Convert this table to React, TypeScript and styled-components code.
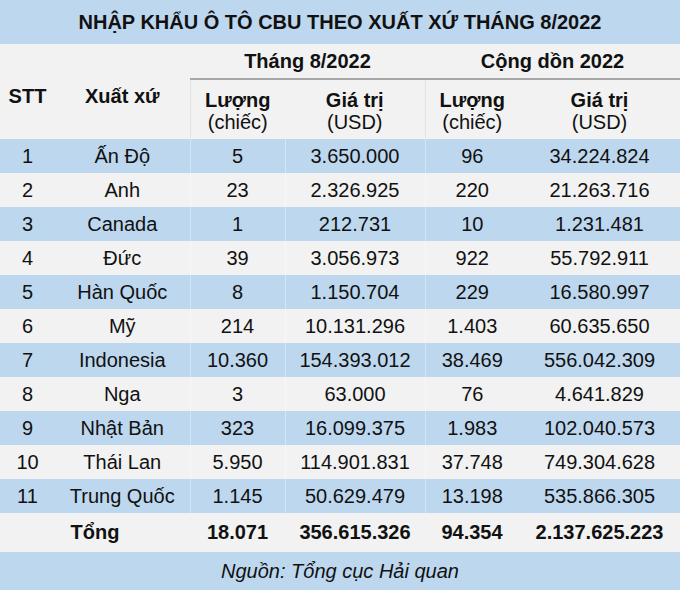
import React from "react";
import styled, { createGlobalStyle } from "styled-components";

const Global = createGlobalStyle`
  html, body { margin: 0; padding: 0; background: #f2f2f2; }
  body { font-family: "Liberation Sans", Arial, sans-serif; color: #111; }
`;

const BLUE = "#bdd7ee";
const GRAY = "#f2f2f2";

const Table = styled.table`
  width: 680px;
  border-collapse: collapse;
  table-layout: fixed;
  font-family: "Liberation Sans", Arial, sans-serif;
  font-size: 20px;
`;

const TitleCell = styled.th`
  height: 44px;
  padding: 0;
  background: ${BLUE};
  font-size: 20px;
  font-weight: bold;
  text-align: center;
  vertical-align: middle;
`;

const HeadRow = styled.tr<{ $h: number }>`
  height: ${(p) => p.$h}px;
  background: ${GRAY};
`;

const HeadCell = styled.th<{ $line?: boolean; $sep?: boolean; $pt?: number }>`
  padding: ${(p) => p.$pt ?? 0}px 0 0 0;
  font-weight: bold;
  text-align: center;
  vertical-align: middle;
  line-height: 22px;
  border-bottom: ${(p) => (p.$line ? "2px solid #a6a6a6" : "none")};
  border-left: ${(p) => (p.$sep ? "1px solid #e4e4e4" : "none")};
`;

const Unit = styled.span`
  display: block;
  font-weight: normal;
`;

const Row = styled.tr<{ $blue: boolean; $h?: number }>`
  height: ${(p) => p.$h ?? 34}px;
  background: ${(p) => (p.$blue ? BLUE : GRAY)};
`;

const Cell = styled.td<{ $bold?: boolean; $sep?: boolean }>`
  padding: 0;
  text-align: center;
  vertical-align: middle;
  font-weight: ${(p) => (p.$bold ? "bold" : "normal")};
  border-left: ${(p) => (p.$sep ? "1px solid rgba(255,255,255,0.35)" : "none")};
`;

const Source = styled.td`
  height: 38px;
  padding: 0;
  background: ${BLUE};
  text-align: center;
  font-style: italic;
  font-size: 20px;
  vertical-align: middle;
`;

const rows: [string, string, string, string, string][] = [
  ["Ấn Độ", "5", "3.650.000", "96", "34.224.824"],
  ["Anh", "23", "2.326.925", "220", "21.263.716"],
  ["Canada", "1", "212.731", "10", "1.231.481"],
  ["Đức", "39", "3.056.973", "922", "55.792.911"],
  ["Hàn Quốc", "8", "1.150.704", "229", "16.580.997"],
  ["Mỹ", "214", "10.131.296", "1.403", "60.635.650"],
  ["Indonesia", "10.360", "154.393.012", "38.469", "556.042.309"],
  ["Nga", "3", "63.000", "76", "4.641.829"],
  ["Nhật Bản", "323", "16.099.375", "1.983", "102.040.573"],
  ["Thái Lan", "5.950", "114.901.831", "37.748", "749.304.628"],
  ["Trung Quốc", "1.145", "50.629.479", "13.198", "535.866.305"],
];

export default function App() {
  return (
    <>
      <Global />
      <Table>
        <colgroup>
          <col style={{ width: 55 }} />
          <col style={{ width: 135 }} />
          <col style={{ width: 95 }} />
          <col style={{ width: 140 }} />
          <col style={{ width: 94 }} />
          <col style={{ width: 161 }} />
        </colgroup>
        <thead>
          <tr>
            <TitleCell colSpan={6}>NHẬP KHẨU Ô TÔ CBU THEO XUẤT XỨ THÁNG 8/2022</TitleCell>
          </tr>
          <HeadRow $h={35}>
            <HeadCell rowSpan={2} $pt={9}>STT</HeadCell>
            <HeadCell rowSpan={2} $pt={9}>Xuất xứ</HeadCell>
            <HeadCell colSpan={2} $line>Tháng 8/2022</HeadCell>
            <HeadCell colSpan={2} $line>Cộng dồn 2022</HeadCell>
          </HeadRow>
          <HeadRow $h={60}>
            <HeadCell $sep $pt={2}>
              Lượng<Unit>(chiếc)</Unit>
            </HeadCell>
            <HeadCell $pt={2}>
              Giá trị<Unit>(USD)</Unit>
            </HeadCell>
            <HeadCell $sep $pt={2}>
              Lượng<Unit>(chiếc)</Unit>
            </HeadCell>
            <HeadCell $pt={2}>
              Giá trị<Unit>(USD)</Unit>
            </HeadCell>
          </HeadRow>
        </thead>
        <tbody>
          {rows.map((r, i) => (
            <Row key={i} $blue={i % 2 === 0}>
              <Cell>{i + 1}</Cell>
              <Cell>{r[0]}</Cell>
              <Cell $sep>{r[1]}</Cell>
              <Cell $sep>{r[2]}</Cell>
              <Cell $sep>{r[3]}</Cell>
              <Cell>{r[4]}</Cell>
            </Row>
          ))}
          <Row $blue={false} $h={39}>
            <Cell colSpan={2} $bold>Tổng</Cell>
            <Cell $bold>18.071</Cell>
            <Cell $bold>356.615.326</Cell>
            <Cell $bold>94.354</Cell>
            <Cell $bold>2.137.625.223</Cell>
          </Row>
          <tr>
            <Source colSpan={6}>Nguồn: Tổng cục Hải quan</Source>
          </tr>
        </tbody>
      </Table>
    </>
  );
}
